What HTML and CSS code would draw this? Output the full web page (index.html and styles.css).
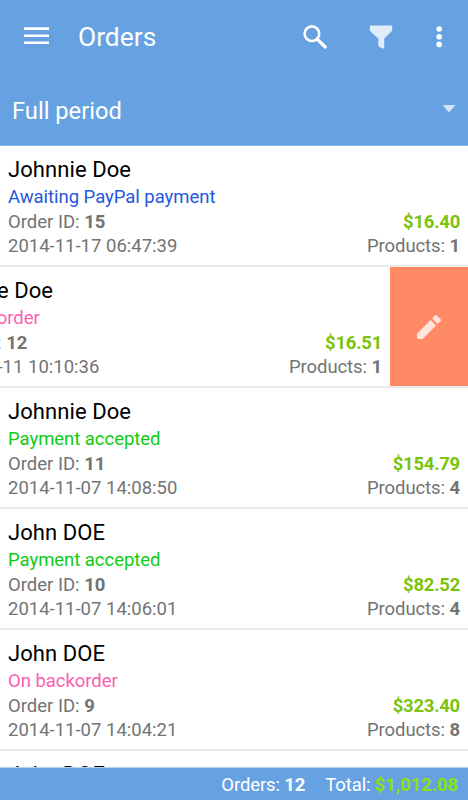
FILE: index.html
```html
<!DOCTYPE html>
<html lang="en">
<head>
<meta charset="utf-8">
<title>Orders</title>
<link rel="stylesheet" href="styles.css">
</head>
<body>
<div class="app">
  <header class="header">
    <div class="toolbar">
      <svg class="menu" width="26" height="18" viewBox="0 0 26 18"><path d="M0 1.6h25M0 8.7h25M0 15.8h25" stroke="#fff" stroke-width="2.6"/></svg>
      <h1 class="title">Orders</h1>
      <svg class="search" width="24" height="24" viewBox="0 0 24 24"><circle cx="8.9" cy="8.7" r="7.3" fill="none" stroke="#fff" stroke-width="2.6"/><path d="M14 14l8.2 8" stroke="#fff" stroke-width="3.2" stroke-linecap="round"/></svg>
      <svg class="filter" width="24" height="24" viewBox="0 0 24 24"><path fill="#e0ecf9" d="M1.8.4h20.4a1 1 0 0 1 1 1V4.500c0 1-.3 1.500-1 2.200L15.200 13.500v9.400c0 .6-.4.7-.9.600-2.900-.5-4.800-1.800-5-3.500v-6.500L1.800 6.700C1.100 6 .8 5.500.8 4.500V1.400a1 1 0 0 1 1-1z"/></svg>
      <svg class="more" width="6" height="22" viewBox="0 0 6 22"><g fill="#fff"><circle cx="3.2" cy="3" r="2.800"/><circle cx="3.2" cy="10.700" r="2.800"/><circle cx="3.2" cy="18.400" r="2.800"/></g></svg>
    </div>
    <div class="period"><span>Full period</span><svg class="caret" width="14" height="8" viewBox="0 0 14 8"><path fill="#d1e3f6" d="M.5 0h13L7 7.500z"/></svg></div>
  </header>
  <main class="list">
    <article class="order">
      <div class="name">Johnnie Doe</div><div class="status paypal">Awaiting PayPal payment</div>
      <div class="line"><span>Order ID: <b>15</b></span><b class="price">$16.40</b></div>
      <div class="line"><span>2014-11-17 06:47:39</span><span class="products">Products: <b>1</b></span></div>
    </article>
    <div class="swipe">
      <article class="order">
        <div class="name">Johnnie Doe</div><div class="status backorder">On backorder</div>
        <div class="line"><span>Order ID: <b>12</b></span><b class="price">$16.51</b></div>
        <div class="line"><span>2014-11-11 10:10:36</span><span class="products">Products: <b>1</b></span></div>
      </article>
      <div class="edit"><svg width="32" height="32" viewBox="0 0 24 24"><path fill="#ffe4dc" d="M3 17v4h4.200L17.300 10.900l-4.200-4.200zM20.700 7.500a1 1 0 0 0 0-1.400l-2.800-2.800a1 1 0 0 0-1.400 0l-2.200 2.200 4.200 4.200z"/></svg></div>
    </div>
    <article class="order">
      <div class="name">Johnnie Doe</div><div class="status accepted">Payment accepted</div>
      <div class="line"><span>Order ID: <b>11</b></span><b class="price">$154.79</b></div>
      <div class="line"><span>2014-11-07 14:08:50</span><span class="products">Products: <b>4</b></span></div>
    </article>
    <article class="order">
      <div class="name">John DOE</div><div class="status accepted">Payment accepted</div>
      <div class="line"><span>Order ID: <b>10</b></span><b class="price">$82.52</b></div>
      <div class="line"><span>2014-11-07 14:06:01</span><span class="products">Products: <b>4</b></span></div>
    </article>
    <article class="order">
      <div class="name">John DOE</div><div class="status backorder">On backorder</div>
      <div class="line"><span>Order ID: <b>9</b></span><b class="price">$323.40</b></div>
      <div class="line"><span>2014-11-07 14:04:21</span><span class="products">Products: <b>8</b></span></div>
    </article>
    <article class="order"><div class="name">John DOE</div></article>
  </main>
  <footer class="footer"><span>Orders: <b>12</b></span><span>Total: <b class="total">$1,012.08</b></span></footer>
</div>
</body>
</html>
```
FILE: styles.css
```css
* { box-sizing: border-box; }
body { margin: 0; background: #fff; font-family: Roboto, sans-serif; }
.app { width: 468px; height: 800px; display: flex; flex-direction: column; overflow: hidden; }
.header { flex: 0 0 146px; background: #66a2e2; color: #fff; border-bottom: 1px solid #8db7eb; }
.toolbar { height: 73px; display: flex; align-items: center; padding: 0 26px 0 24px; }
.menu { margin-top: -1px; }
.title { margin: 1px 0 0 28px; font-size: 26.4px; font-weight: 400; flex: 1; }
.filter { margin: 0 43px 0 42px; }
.period { height: 72px; display: flex; align-items: center; justify-content: space-between; padding: 3px 12px 0; font-size: 23.700px; }
.caret { margin: -4px 0 0; }
.list { flex: 1; min-height: 0; overflow: hidden; }
.order { height: 121px; padding: 9px 8px 0; border-bottom: 2px solid #ebebeb; background: #fff; color: #737373; font-size: 18.5px; }
.name { height: 30px; line-height: 30px; color: #000; font-size: 22px; letter-spacing: .08px; }
.status, .line { height: 24.7px; line-height: 24.7px; white-space: nowrap; }
.status { letter-spacing: -.04px; }
.line { display: flex; justify-content: space-between; }
.products { letter-spacing: -.08px; }
.paypal { color: #2458dc; }
.backorder { color: #ff5eb0; }
.accepted { color: #10cc10; }
.price { color: #7bc30c; letter-spacing: -.25px; }
.swipe { display: flex; height: 121px; justify-content: flex-end; overflow: hidden; border-bottom: 2px solid #ebebeb; }
.swipe .order { flex: 0 0 468px; border: 0; }
.edit { flex: 0 0 78px; height: 119px; background: #ff8a65; display: flex; align-items: center; justify-content: center; }
.footer { flex: 0 0 33px; background: #66a2e2; color: #fff; border-top: 1px solid #b5cfee; display: flex; align-items: center; justify-content: flex-end; gap: 20px; padding: 1px 10px 0; font-size: 18.5px; letter-spacing: -.12px; }
.total { color: #8ae310; }
```
